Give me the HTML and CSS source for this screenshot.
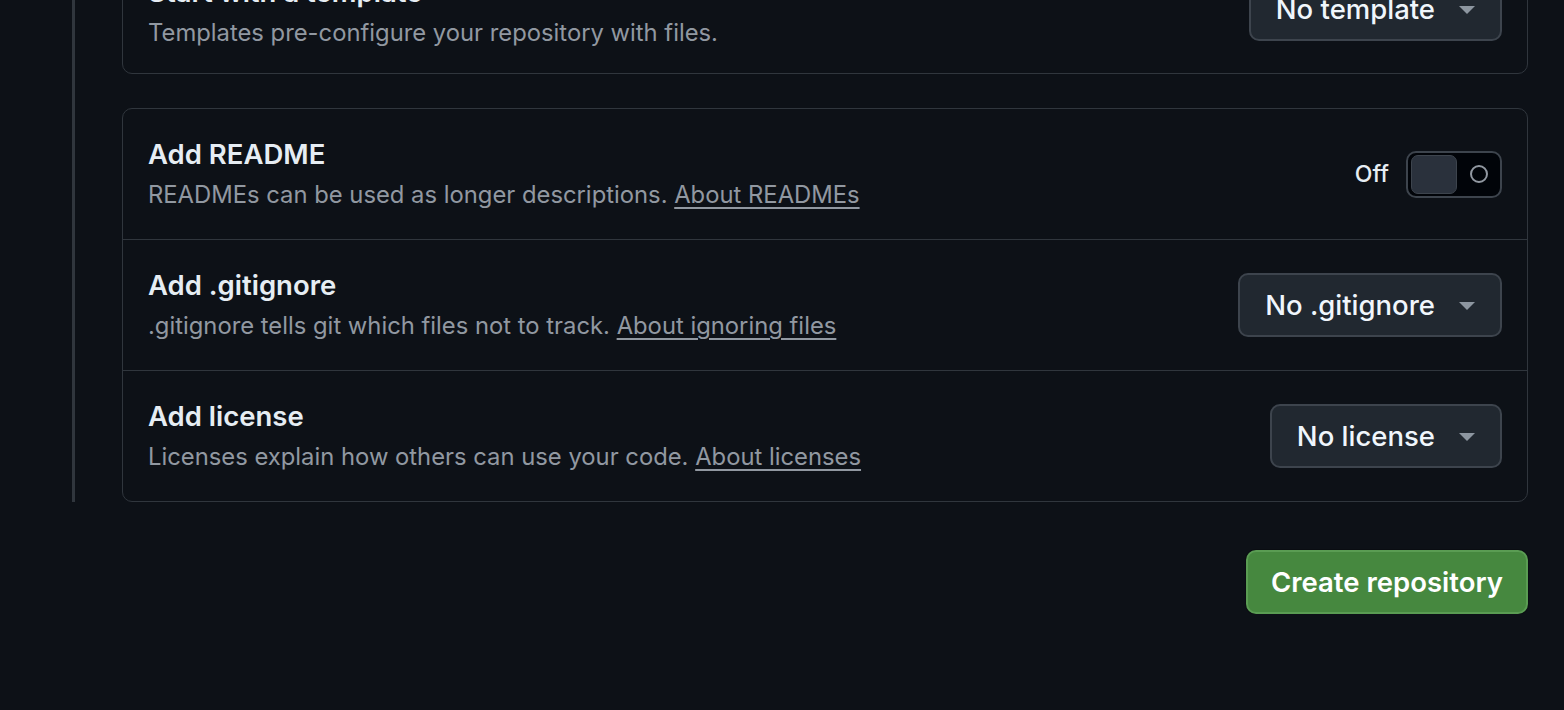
FILE: index.html
```html
<!DOCTYPE html>
<html lang="en">
<head>
    <meta charset="UTF-8">
    <meta name="viewport" content="width=device-width, initial-scale=1.0">
    <title>Create a new repository</title>
    <link rel="stylesheet" href="styles.css">
</head>
<body>
    <div class="page">
        <div class="steps">
            <div class="box">
                <div class="row row-template">
                    <div class="row-text">
                        <div class="row-title">Start with a template</div>
                        <div class="row-desc">Templates pre-configure your repository with files.</div>
                    </div>
                    <button class="select">No template <span class="caret"></span></button>
                </div>
            </div>

            <div class="box">
                <div class="row">
                    <div class="row-text">
                        <div class="row-title">Add README</div>
                        <div class="row-desc">READMEs can be used as longer descriptions. <a href="#">About READMEs</a></div>
                    </div>
                    <div class="toggle-wrap">
                        <span class="toggle-label">Off</span>
                        <button class="toggle">
                            <span class="knob"></span>
                            <span class="off-icon"></span>
                        </button>
                    </div>
                </div>
                <div class="row">
                    <div class="row-text">
                        <div class="row-title">Add .gitignore</div>
                        <div class="row-desc">.gitignore tells git which files not to track. <a href="#">About ignoring files</a></div>
                    </div>
                    <button class="select">No .gitignore <span class="caret"></span></button>
                </div>
                <div class="row">
                    <div class="row-text">
                        <div class="row-title">Add license</div>
                        <div class="row-desc">Licenses explain how others can use your code. <a href="#">About licenses</a></div>
                    </div>
                    <button class="select">No license <span class="caret"></span></button>
                </div>
            </div>
        </div>

        <div class="actions">
            <button class="create-btn">Create repository</button>
        </div>
    </div>
</body>
</html>
```

FILE: styles.css
```css
body {
    margin: 0;
    padding: 0;
    background-color: #0d1117;
    color: #e6edf3;
    font-family: Inter, "Noto Sans", "Liberation Sans", sans-serif;
    overflow: hidden;
}
.page {
    margin-top: -56px;
    padding-left: 72px;
    padding-right: 36px;
}
.steps {
    border-left: 3px solid #30363d;
    padding-left: 47px;
    display: flex;
    flex-direction: column;
    gap: 34px;
}
.box {
    border: 1px solid #30363d;
    border-radius: 10px;
}
.row {
    height: 130px;
    display: flex;
    align-items: center;
    justify-content: space-between;
    padding: 0 25px;
    border-top: 1px solid #30363d;
}
.row:first-child {
    border-top: none;
}
.row-text {
    margin-top: 3px;
}
.row-template {
    height: 128px;
}
.row-template .row-text {
    margin-top: 8px;
}
.row-title {
    font-size: 27.5px;
    font-weight: 600;
    line-height: 36px;
    margin-top: -2px;
}
.row-desc {
    font-size: 23.8px;
    color: #9198a1;
    line-height: 36px;
    margin-top: 5px;
}
.row-desc a {
    color: #9198a1;
    text-decoration: underline;
    text-underline-offset: 4px;
}
.select {
    height: 64px;
    padding: 0 25px;
    display: flex;
    align-items: center;
    gap: 24px;
    background-color: #212830;
    border: 2px solid #3d444d;
    border-radius: 10px;
    color: #f0f6fc;
    font-family: inherit;
    font-size: 27.5px;
    font-weight: 500;
}
.caret {
    width: 0;
    height: 0;
    border-left: 8px solid transparent;
    border-right: 8px solid transparent;
    border-top: 8px solid #8d96a0;
    margin-top: 2px;
}
.toggle-wrap {
    display: flex;
    align-items: center;
    gap: 17px;
}
.toggle-label {
    font-size: 23px;
    font-weight: 500;
}
.toggle {
    width: 96px;
    height: 47px;
    padding: 3px;
    background-color: #010409;
    border: 2px solid #3d444d;
    border-radius: 10px;
    display: flex;
    align-items: center;
    box-sizing: border-box;
}
.knob {
    width: 46px;
    height: 39px;
    background-color: #2a313c;
    border: 1px solid #3d444d;
    border-radius: 7px;
    box-sizing: border-box;
}
.off-icon {
    width: 14px;
    height: 14px;
    border: 2px solid #9198a1;
    border-radius: 50%;
    margin-left: 13px;
}
.actions {
    display: flex;
    justify-content: flex-end;
    margin-top: 48px;
}
.create-btn {
    height: 64px;
    padding: 0 23px;
    background-color: #46883f;
    border: 2px solid #5a9c53;
    border-radius: 10px;
    color: #ffffff;
    font-family: inherit;
    font-size: 27.5px;
    font-weight: 600;
    box-shadow: 0 0 0 1px rgba(0, 0, 0, 0.2);
}
```
